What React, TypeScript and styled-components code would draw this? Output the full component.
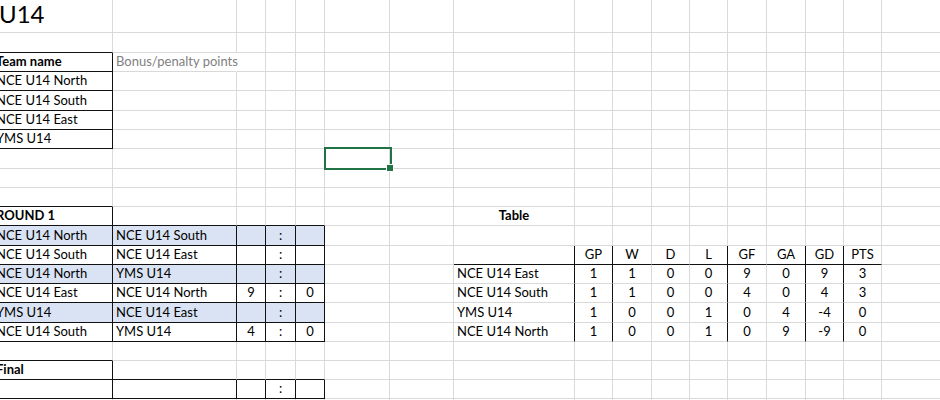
import React from 'react';
import styled, { createGlobalStyle } from 'styled-components';

const GlobalStyle = createGlobalStyle`
  html, body { margin: 0; padding: 0; background: #ffffff; overflow: hidden; }
  body { font-family: Lato, "Liberation Sans", sans-serif; }
`;

const COLS = [120, 124, 29, 30, 29, 65, 64, 121, 38, 39, 38, 38, 39, 39, 38, 38, 80];
const ROWS = [33, 20, 19, 19, 20, 19, 19, 20, 19, 19, 19, 20, 19, 19, 19, 20, 19, 19, 19, 19, 20];

const GRID = '#d9d9d9';
const INK = '#111111';

const Sheet = styled.div`
  display: grid;
  grid-template-columns: ${COLS.map((c) => `${c}px`).join(' ')};
  grid-template-rows: ${ROWS.map((r) => `${r}px`).join(' ')};
  margin-left: -7px;
  width: max-content;
`;

type CellProps = {
  $br: 'grid' | 'ink' | 'none';
  $bb: 'grid' | 'ink';
  $fill: boolean;
  $bold: boolean;
  $center: boolean;
  $muted: boolean;
  $title: boolean;
};

const Cell = styled.div<CellProps>`
  position: relative;
  box-sizing: border-box;
  min-width: 0;
  border-right: 1px solid
    ${(p) => (p.$br === 'ink' ? INK : p.$br === 'none' ? 'transparent' : GRID)};
  border-bottom: 1px solid ${(p) => (p.$bb === 'ink' ? INK : GRID)};
  background: ${(p) => (p.$fill ? '#dae3f3' : 'transparent')};
  display: flex;
  align-items: flex-end;
  justify-content: ${(p) => (p.$center ? 'center' : 'flex-start')};
  padding: 0 3px ${(p) => (p.$title ? '3px' : '1px')} ${(p) => (p.$title ? '6px' : '3px')};
  font-size: ${(p) => (p.$title ? '24px' : '13px')};
  line-height: 1.2;
  font-weight: ${(p) => (p.$bold ? 700 : 400)};
  color: ${(p) => (p.$muted ? '#808080' : '#000000')};
  white-space: nowrap;
`;

const Selection = styled.div`
  position: absolute;
  left: -1px;
  top: -2px;
  width: 68px;
  height: 23px;
  box-sizing: border-box;
  border: 2px solid #217346;
  z-index: 2;
`;

const Handle = styled.div`
  position: absolute;
  right: -4px;
  bottom: -4px;
  width: 6px;
  height: 6px;
  background: #217346;
  border: 1px solid #ffffff;
`;

type Spec = { text?: string; bold?: boolean; center?: boolean; muted?: boolean; title?: boolean };

const content: Record<string, Spec> = {};
const put = (r: number, c: number, s: Spec) => {
  content[`${r},${c}`] = s;
};

put(0, 0, { text: 'U14', title: true });
put(2, 0, { text: 'Team name', bold: true });
put(2, 1, { text: 'Bonus/penalty points', muted: true });
['NCE U14 North', 'NCE U14 South', 'NCE U14 East', 'YMS U14'].forEach((t, i) => put(3 + i, 0, { text: t }));

put(10, 0, { text: 'ROUND 1', bold: true });
const matches: [string, string, string, string][] = [
  ['NCE U14 North', 'NCE U14 South', '', ''],
  ['NCE U14 South', 'NCE U14 East', '', ''],
  ['NCE U14 North', 'YMS U14', '', ''],
  ['NCE U14 East', 'NCE U14 North', '9', '0'],
  ['YMS U14', 'NCE U14 East', '', ''],
  ['NCE U14 South', 'YMS U14', '4', '0'],
];
matches.forEach(([h, a, hs, as], i) => {
  const r = 11 + i;
  put(r, 0, { text: h });
  put(r, 1, { text: a });
  put(r, 2, { text: hs, center: true });
  put(r, 3, { text: ':', center: true });
  put(r, 4, { text: as, center: true });
});
put(18, 0, { text: 'Final', bold: true });
put(19, 3, { text: ':', center: true });

put(10, 7, { text: 'Table', bold: true, center: true });
['GP', 'W', 'D', 'L', 'GF', 'GA', 'GD', 'PTS'].forEach((h, i) => put(12, 8 + i, { text: h, center: true }));
const standings: [string, string[]][] = [
  ['NCE U14 East', ['1', '1', '0', '0', '9', '0', '9', '3']],
  ['NCE U14 South', ['1', '1', '0', '0', '4', '0', '4', '3']],
  ['YMS U14', ['1', '0', '0', '1', '0', '4', '-4', '0']],
  ['NCE U14 North', ['1', '0', '0', '1', '0', '9', '-9', '0']],
];
standings.forEach(([name, vals], i) => {
  const r = 13 + i;
  put(r, 7, { text: name });
  vals.forEach((v, j) => put(r, 8 + j, { text: v, center: true }));
});

const boxed = new Set<string>();
const box = (r: number, c: number) => boxed.add(`${r},${c}`);
for (let r = 2; r <= 6; r++) box(r, 0);
box(10, 0);
for (let r = 11; r <= 16; r++) for (let c = 0; c <= 4; c++) box(r, c);
box(18, 0);
for (let c = 0; c <= 4; c++) box(19, c);

const isBoxed = (r: number, c: number) => boxed.has(`${r},${c}`);
const filled = (r: number, c: number) => (r === 11 || r === 13 || r === 15) && c <= 4;

const tableRightInk = (r: number, c: number) =>
  r >= 12 && r <= 16 && [7, 8, 11, 13, 14].includes(c);
const tableBottomInk = (r: number, c: number) => r === 12 && c >= 7 && c <= 15;

export default function App() {
  const cells: React.ReactNode[] = [];
  ROWS.forEach((_, r) => {
    COLS.forEach((__, c) => {
      const s = content[`${r},${c}`] || {};
      const br: 'grid' | 'ink' | 'none' =
        isBoxed(r, c) || isBoxed(r, c + 1) || tableRightInk(r, c)
          ? 'ink'
          : r === 2 && c === 1
          ? 'none'
          : 'grid';
      const bb: 'grid' | 'ink' =
        isBoxed(r, c) || isBoxed(r + 1, c) || tableBottomInk(r, c) ? 'ink' : 'grid';
      cells.push(
        <Cell
          key={`${r}-${c}`}
          $br={br}
          $bb={bb}
          $fill={filled(r, c)}
          $bold={!!s.bold}
          $center={!!s.center}
          $muted={!!s.muted}
          $title={!!s.title}
        >
          {s.text}
          {r === 7 && c === 5 && (
            <Selection>
              <Handle />
            </Selection>
          )}
        </Cell>
      );
    });
  });
  return (
    <>
      <GlobalStyle />
      <Sheet>{cells}</Sheet>
    </>
  );
}
